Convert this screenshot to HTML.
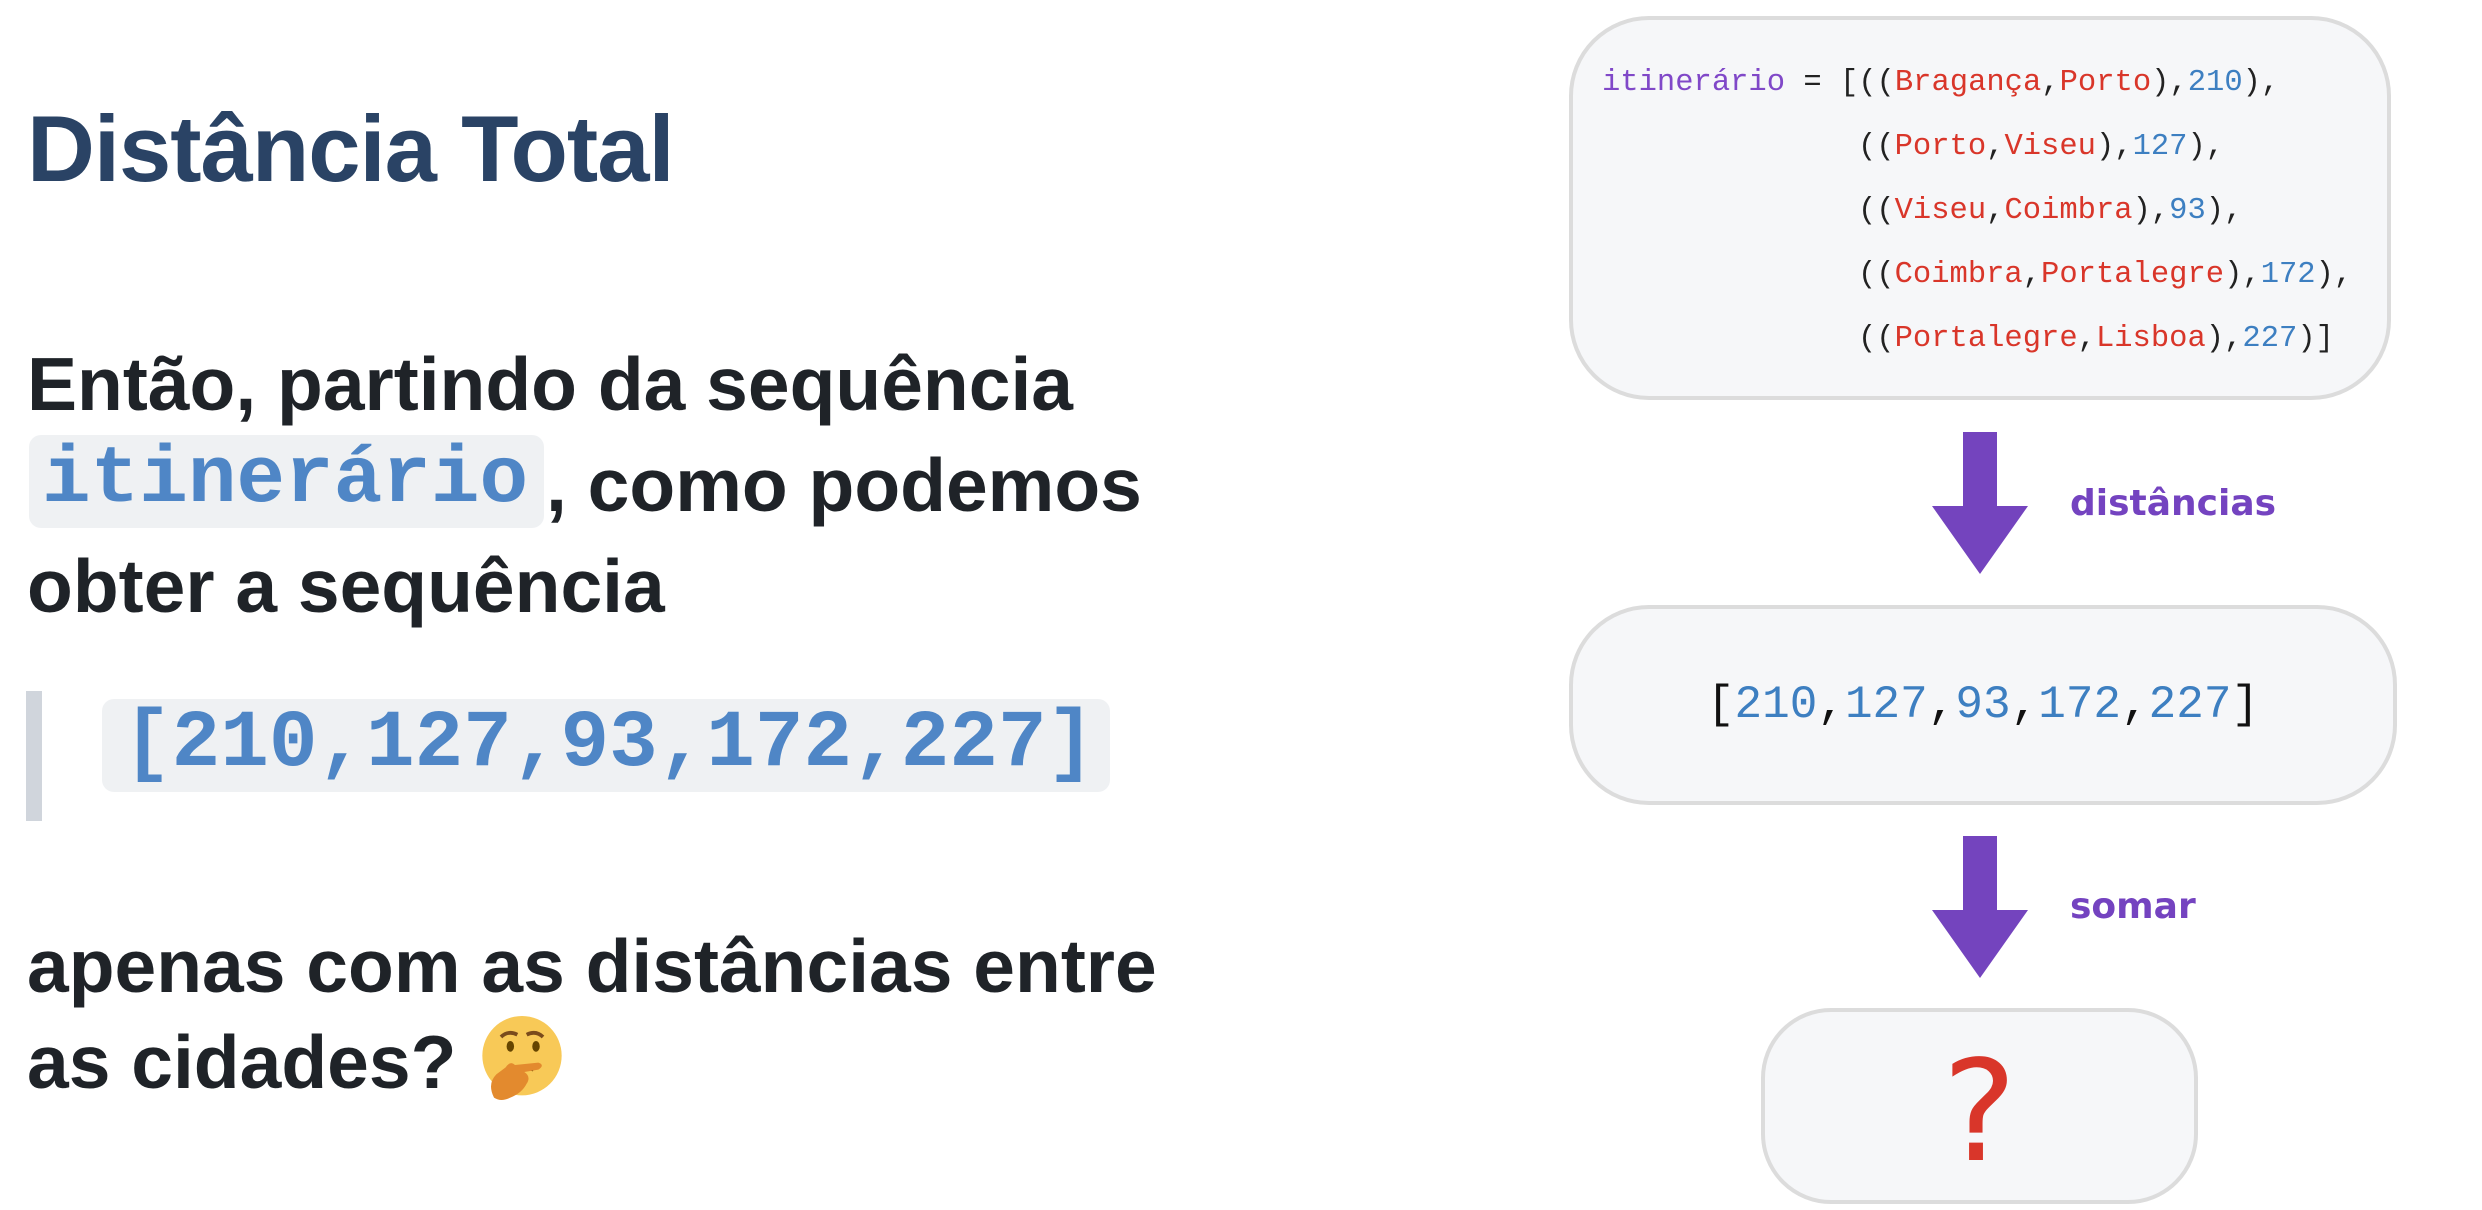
<!DOCTYPE html>
<html><head><meta charset="utf-8">
<style>
html,body{margin:0;padding:0;background:#fff;}
body{width:2482px;height:1210px;position:relative;overflow:hidden;font-family:"Liberation Sans",sans-serif;}
.a{position:absolute;white-space:nowrap;}
h1{position:absolute;left:27px;top:102px;margin:0;font-size:94px;font-weight:bold;color:#2a4365;letter-spacing:-1px;line-height:1;}
.p{position:absolute;left:27px;font-size:75px;font-weight:bold;color:#1f2328;line-height:1;white-space:nowrap;}
.code{background:#eff1f3;border-radius:12px;color:#4f86c6;font-family:"Liberation Mono",monospace;font-weight:bold;}
.box{position:absolute;background:#f6f7f9;border:4px solid #dcdcdc;box-sizing:border-box;}
.m{font-family:"Liberation Mono",monospace;font-size:30.5px;color:#222;}
.r{color:#d9362a}.b{color:#3d7fc1}.v{color:#8048c8}
.lbl{position:absolute;font-family:"DejaVu Sans","Liberation Sans",sans-serif;font-weight:bold;color:#7443c0;font-size:36px;}
</style></head><body>
<h1>Distância Total</h1>
<div class="p" style="top:347px">Então, partindo da sequência</div>
<div class="a code" style="left:29px;top:435px;width:515px;height:93px;"></div>
<div class="a" style="left:42px;top:434px;font-family:'Liberation Mono',monospace;font-weight:bold;font-size:81px;color:#4f86c6;line-height:1.15;">itinerário</div>
<div class="p" style="left:546px;top:448px">, como podemos</div>
<div class="p" style="top:549px">obter a sequência</div>
<div class="a" style="left:26px;top:691px;width:16px;height:130px;background:#d0d5dc"></div>
<div class="a code" style="left:102px;top:699px;width:1008px;height:93px;"></div>
<div class="a" style="left:123px;top:698px;font-family:'Liberation Mono',monospace;font-weight:bold;font-size:81px;color:#4f86c6;line-height:1.15;">[210,127,93,172,227]</div>
<div class="p" style="top:929px">apenas com as distâncias entre</div>
<div class="p" style="top:1025px">as cidades?</div>
<svg class="a" style="left:480px;top:1016px" width="84" height="84" viewBox="0 0 36 36">
<circle cx="18" cy="17" r="17" fill="#f8c957"/>
<path d="M9 9 q3-3 7-1" stroke="#7a4b1c" stroke-width="1.6" fill="none"/>
<path d="M20 8 q4-2 7 1" stroke="#7a4b1c" stroke-width="1.6" fill="none"/>
<ellipse cx="13" cy="13" rx="1.6" ry="2.3" fill="#664500"/>
<ellipse cx="24" cy="13" rx="1.6" ry="2.3" fill="#664500"/>
<path d="M14 23 q5-2 9 0" stroke="#664500" stroke-width="1.6" fill="none"/>
<path d="M6 35 q-3-6 1-10 l4-3 q2-3 4-1 l10-1 q3 1 0 3 l-6 1 q3 2 1 5 q-2 4-7 6 q-4 2-7 0z" fill="#e38a2e"/>
</svg>

<div class="box" style="left:1569px;top:16px;width:822px;height:384px;border-radius:80px;"></div>
<div class="a m" style="left:1602px;top:51px;line-height:64px;"><span class="v">itinerário</span> = [((<span class="r">Bragança</span>,<span class="r">Porto</span>),<span class="b">210</span>),<br>
<span style="padding-left:256px">((<span class="r">Porto</span>,<span class="r">Viseu</span>),<span class="b">127</span>),</span><br>
<span style="padding-left:256px">((<span class="r">Viseu</span>,<span class="r">Coimbra</span>),<span class="b">93</span>),</span><br>
<span style="padding-left:256px">((<span class="r">Coimbra</span>,<span class="r">Portalegre</span>),<span class="b">172</span>),</span><br>
<span style="padding-left:256px">((<span class="r">Portalegre</span>,<span class="r">Lisboa</span>),<span class="b">227</span>)]</span></div>

<svg class="a" style="left:1930px;top:430px" width="100" height="146"><path d="M33 2 H67 V76 H98 L50 144 L2 76 H33 Z" fill="#7444be"/></svg>
<div class="lbl" style="left:2070px;top:483px">distâncias</div>

<div class="box" style="left:1569px;top:605px;width:828px;height:200px;border-radius:80px;"></div>
<div class="a" style="left:1569px;width:828px;text-align:center;top:679px;font-family:'Liberation Mono',monospace;font-size:46px;color:#111;">[<span class="b">210</span>,<span class="b">127</span>,<span class="b">93</span>,<span class="b">172</span>,<span class="b">227</span>]</div>

<svg class="a" style="left:1930px;top:834px" width="100" height="146"><path d="M33 2 H67 V76 H98 L50 144 L2 76 H33 Z" fill="#7444be"/></svg>
<div class="lbl" style="left:2070px;top:886px">somar</div>

<div class="box" style="left:1761px;top:1008px;width:437px;height:196px;border-radius:70px;"></div>
<div class="a" style="left:1761px;width:437px;text-align:center;top:1043px;font-family:'DejaVu Sans',sans-serif;font-size:140px;color:#d9362a;line-height:1;">?</div>
</body></html>
